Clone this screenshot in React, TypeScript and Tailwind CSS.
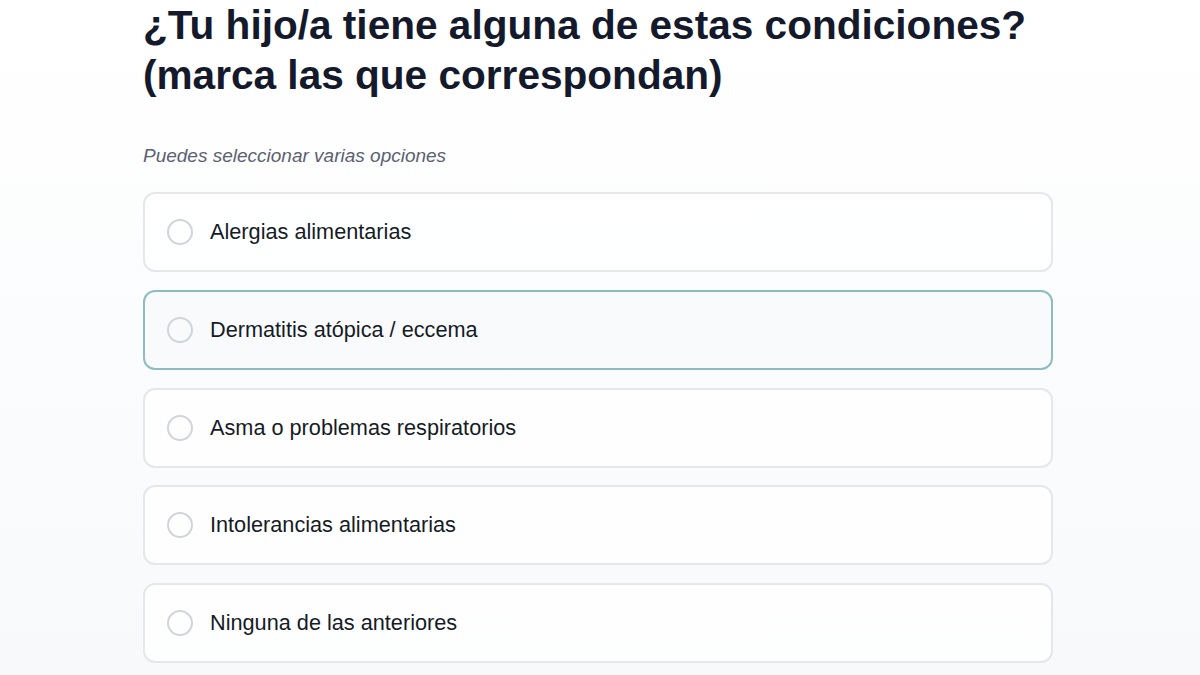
const options = [
  'Alergias alimentarias',
  'Dermatitis atópica / eccema',
  'Asma o problemas respiratorios',
  'Intolerancias alimentarias',
  'Ninguna de las anteriores',
];

export default function App() {
  const focused = 1;

  return (
    <div
      className="min-h-[675px] w-full bg-gradient-to-b from-white to-[#f7f9fb] pl-[143px]"
      style={{ fontFamily: '"Liberation Sans", Arial, sans-serif' }}
    >
      <div className="w-[910px]">
        <h1 className="text-[40.6px] leading-[50px] font-bold text-[#141a2b]">
          ¿Tu hijo/a tiene alguna de estas condiciones?
          <br />
          (marca las que correspondan)
        </h1>

        <p className="mt-[44px] text-[19px] leading-[24px] italic text-[#5b6170]">
          Puedes seleccionar varias opciones
        </p>

        <div className="mt-[24px] flex flex-col gap-[17.75px]">
          {options.map((label, i) => (
            <button
              key={label}
              type="button"
              className={
                i === focused
                  ? 'flex h-[80px] w-full items-center gap-[17px] rounded-[12px] border-2 border-[#8dbdc3] bg-[#f8fafc] px-[22px] text-left'
                  : 'flex h-[80px] w-full items-center gap-[17px] rounded-[12px] border-2 border-[#e5e7eb] bg-white/80 px-[22px] text-left'
              }
            >
              <span className="h-[26px] w-[26px] shrink-0 rounded-full border-2 border-[#d1d5db]" />
              <span className="text-[21.7px] leading-[28px] text-[#161b26]">{label}</span>
            </button>
          ))}
        </div>
      </div>
    </div>
  );
}
